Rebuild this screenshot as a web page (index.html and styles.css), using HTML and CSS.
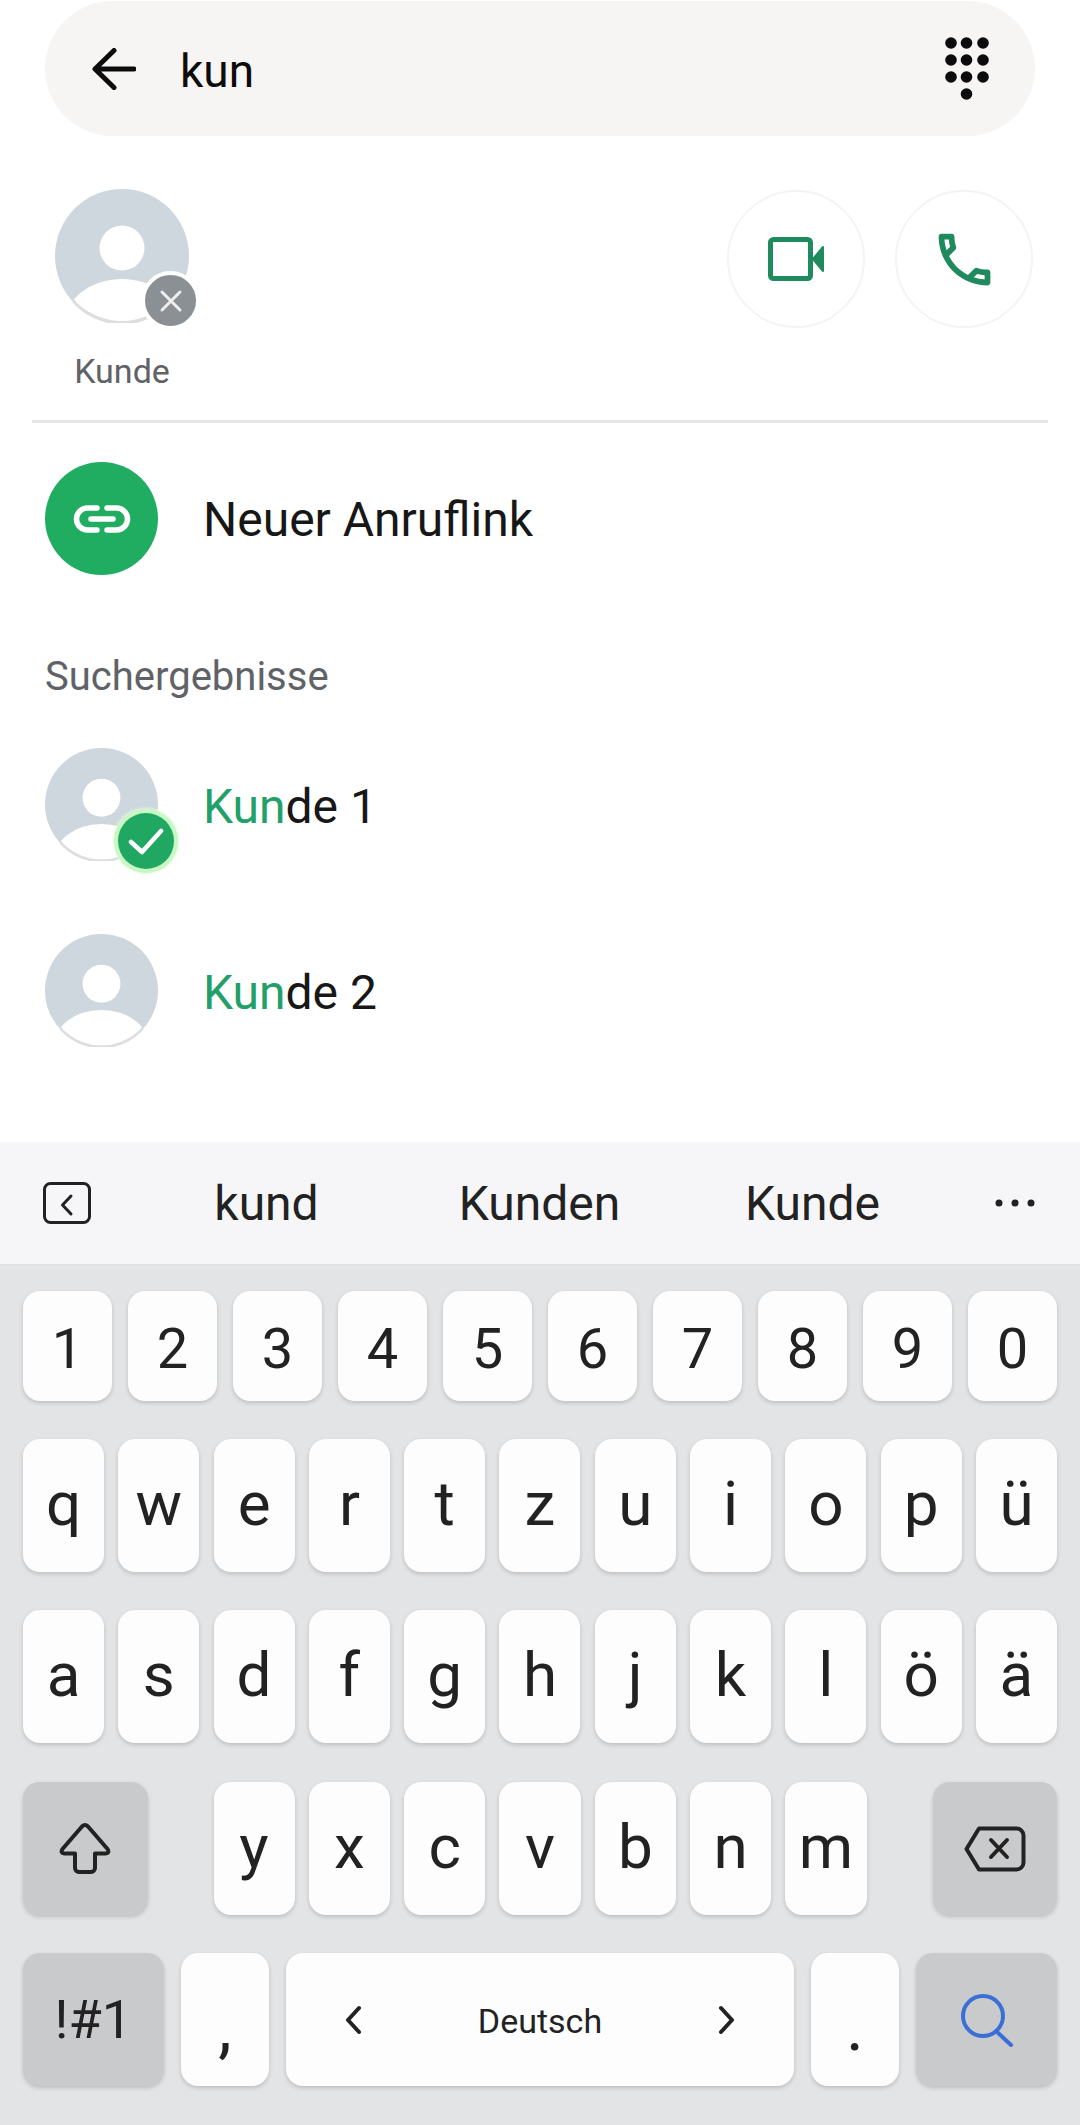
FILE: index.html
```html
<!DOCTYPE html>
<html lang="de">
<head>
<meta charset="utf-8">
<title>Suche</title>
<link rel="stylesheet" href="styles.css">
</head>
<body>
<svg class="defs" width="0" height="0" aria-hidden="true">
  <defs>
    <clipPath id="avatar-clip"><circle cx="67" cy="67" r="65"/></clipPath>
    <symbol id="avatar" viewBox="0 0 134 134">
      <circle cx="67" cy="67" r="67" fill="#cdd7dd"/>
      <path d="M17 113a67 67 0 0 0 100 0z" fill="#dcdedf"/>
      <circle cx="67" cy="59" r="22.500" fill="#fff"/>
      <ellipse cx="67" cy="136" rx="58" ry="46" fill="#fff" clip-path="url(#avatar-clip)"/>
    </symbol>
  </defs>
</svg>
<main class="screen">
  <header class="search">
    <svg class="back" width="44" height="42" viewBox="0 0 44 42"><path d="M42 21H4M22 2.500 3 21l19 18.500" fill="none" stroke="#0c0c0c" stroke-width="5" stroke-linecap="round" stroke-linejoin="round"/></svg>
    <span class="query">kun</span>
    <svg class="dial" width="44" height="64" viewBox="0 0 44 64" fill="#0c0c0c">
      <circle cx="6" cy="6" r="5.800"/><circle cx="21.500" cy="6" r="5.800"/><circle cx="38" cy="6" r="5.800"/>
      <circle cx="6" cy="23" r="5.800"/><circle cx="21.500" cy="23" r="5.800"/><circle cx="38" cy="23" r="5.800"/>
      <circle cx="6" cy="40" r="5.800"/><circle cx="21.500" cy="40" r="5.800"/><circle cx="38" cy="40" r="5.800"/>
      <circle cx="21.500" cy="57" r="5.800"/>
    </svg>
  </header>

  <section class="selected">
    <div class="picked">
      <div class="picked-photo">
        <svg class="avatar-lg"><use href="#avatar"/></svg>
        <span class="remove">
          <svg width="24" height="24" viewBox="0 0 24 24"><path d="M3 3l18 18M21 3 3 21" stroke="#eef0f0" stroke-width="3" stroke-linecap="round"/></svg>
        </span>
      </div>
      <span class="picked-name">Kunde</span>
    </div>
    <div class="actions">
      <button class="round">
        <svg width="56" height="44" viewBox="0 0 56 44"><rect x="2.500" y="2.500" width="40" height="39" rx="3" fill="none" stroke="#1f8a5e" stroke-width="5"/><path d="M45 22 55 10v24z" fill="#1f8a5e" stroke="#1f8a5e" stroke-width="2" stroke-linejoin="round"/></svg>
      </button>
      <button class="round">
        <svg width="69" height="69" viewBox="0 0 24 24"><path fill="#1f8a5e" d="M6.540 5c.06.89.21 1.760.45 2.590l-1.200 1.200c-.41-1.200-.67-2.470-.76-3.790h1.510m9.860 12.020c.85.24 1.720.39 2.600.45v1.490c-1.320-.09-2.590-.35-3.800-.75l1.200-1.190M7.500 3H4c-.55 0-1 .45-1 1 0 9.390 7.610 17 17 17 .55 0 1-.45 1-1v-3.490c0-.55-.45-1-1-1-1.240 0-2.450-.2-3.570-.57-.1-.04-.21-.05-.31-.05-.26 0-.51.1-.71.29l-2.200 2.200c-2.830-1.450-5.150-3.760-6.590-6.590l2.200-2.200c.28-.28.36-.67.25-1.020C8.700 6.450 8.500 5.250 8.500 4c0-.55-.45-1-1-1z"/></svg>
      </button>
    </div>
  </section>
  <hr class="divider">

  <section class="list">
    <div class="row row-link">
      <span class="link-icon">
        <svg width="58" height="28" viewBox="0 0 58 28" fill="none" stroke="#fff" stroke-width="5.500" stroke-linecap="round"><path d="M24 3H14.500a11 11 0 0 0 0 22H24M34 3h9.500a11 11 0 0 1 0 22H34M18 14h22"/></svg>
      </span>
      <span class="row-name">Neuer Anruflink</span>
    </div>
    <h2 class="list-title">Suchergebnisse</h2>
    <div class="row">
      <div class="photo">
        <svg class="avatar-md"><use href="#avatar"/></svg>
        <span class="check">
          <svg width="36" height="27" viewBox="0 0 36 27"><path d="M3 14l11 10L33 3" fill="none" stroke="#fff" stroke-width="4.500" stroke-linecap="round" stroke-linejoin="round"/></svg>
        </span>
      </div>
      <span class="row-name row-result"><span class="hit">Kun</span>de 1</span>
    </div>
    <div class="row row-next">
      <div class="photo"><svg class="avatar-md"><use href="#avatar"/></svg></div>
      <span class="row-name row-result"><span class="hit">Kun</span>de 2</span>
    </div>
  </section>

  <section class="keyboard">
    <div class="suggest">
      <span class="suggest-back">
        <svg width="48" height="42" viewBox="0 0 48 42" fill="none" stroke="#222" stroke-width="3"><rect x="1.500" y="1.500" width="45" height="39" rx="6"/><path d="M28 14 19.500 23l8.500 9" stroke-linecap="round" stroke-linejoin="round"/></svg>
      </span>
      <span class="word">kund</span>
      <span class="word">Kunden</span>
      <span class="word">Kunde</span>
      <span class="suggest-more">
        <svg width="40" height="8" viewBox="0 0 40 8" fill="#222"><circle cx="4" cy="4" r="3.500"/><circle cx="20" cy="4" r="3.500"/><circle cx="36" cy="4" r="3.500"/></svg>
      </span>
    </div>
    <div class="keys">
      <div class="krow krow-num">
        <span class="key digit">1</span><span class="key digit">2</span><span class="key digit">3</span><span class="key digit">4</span><span class="key digit">5</span><span class="key digit">6</span><span class="key digit">7</span><span class="key digit">8</span><span class="key digit">9</span><span class="key digit">0</span>
      </div>
      <div class="krow krow-letter">
        <span class="key">q</span><span class="key">w</span><span class="key">e</span><span class="key">r</span><span class="key">t</span><span class="key">z</span><span class="key">u</span><span class="key">i</span><span class="key">o</span><span class="key">p</span><span class="key">ü</span>
      </div>
      <div class="krow krow-letter">
        <span class="key">a</span><span class="key">s</span><span class="key">d</span><span class="key">f</span><span class="key">g</span><span class="key">h</span><span class="key">j</span><span class="key">k</span><span class="key">l</span><span class="key">ö</span><span class="key">ä</span>
      </div>
      <div class="krow krow-shift">
        <span class="key fn">
          <svg width="52" height="54" viewBox="0 0 52 54"><path d="M23 4.500q3-3 6 0L48.500 27q2.500 4-2 4.500H36V46a4 4 0 0 1-4 4H20a4 4 0 0 1-4-4V31.500H5.500q-4.500-.5-2-4.500z" fill="none" stroke="#222" stroke-width="4" stroke-linejoin="round"/></svg>
        </span>
        <div class="letters">
          <span class="key">y</span><span class="key">x</span><span class="key">c</span><span class="key">v</span><span class="key">b</span><span class="key">n</span><span class="key">m</span>
        </div>
        <span class="key fn">
          <svg width="62" height="46" viewBox="0 0 62 46" fill="none" stroke="#222" stroke-width="4" stroke-linejoin="round" stroke-linecap="round"><path d="M15 2.500h37a7 7 0 0 1 7.500 7v27a7 7 0 0 1-7.500 7H15L2.500 23z"/><path d="M27 14l16 17M43 14 27 31"/></svg>
        </span>
      </div>
      <div class="krow krow-bottom">
        <span class="key fn sym">!#1</span>
        <span class="key low">,</span>
        <span class="key space">
          <svg width="18" height="30" viewBox="0 0 18 30"><path d="M15 3 4 15l11 12" fill="none" stroke="#222" stroke-width="4" stroke-linecap="round" stroke-linejoin="round"/></svg>
          <span class="lang">Deutsch</span>
          <svg width="18" height="30" viewBox="0 0 18 30"><path d="M3 3l11 12L3 27" fill="none" stroke="#222" stroke-width="4" stroke-linecap="round" stroke-linejoin="round"/></svg>
        </span>
        <span class="key low">.</span>
        <span class="key fn">
          <svg width="54" height="54" viewBox="0 0 54 54" fill="none" stroke="#3b6fd6" stroke-width="4" stroke-linecap="round"><circle cx="23" cy="23" r="20"/><path d="M36 38l15 14"/></svg>
        </span>
      </div>
    </div>
  </section>
</main>
</body>
</html>
```

FILE: styles.css
```css
* { box-sizing: border-box; }
html, body { margin: 0; padding: 0; background: #fff; }
body { font-family: Roboto, "Liberation Sans", sans-serif; color: #171717; }
.defs { display: block; height: 0; }
.screen { width: 1080px; height: 2125px; display: flex; flex-direction: column; overflow: hidden; }

.search {
  margin: 1px 45px 0;
  height: 135px;
  flex: none;
  border-radius: 68px;
  background: #f6f5f3;
  display: flex;
  align-items: center;
  padding: 0 46px 0 47px;
}
.back { flex: none; }
.query { font-size: 46px; margin: 4px 0 0 44px; flex: 1; line-height: 1; color: #0c0c0c; }
.dial { flex: none; margin-top: 1px; }

.selected {
  flex: none;
  height: 284px;
  display: flex;
  justify-content: space-between;
  align-items: flex-start;
  padding: 53px 47px 0 55px;
}
.picked { width: 134px; display: flex; flex-direction: column; align-items: center; }
.picked-photo { position: relative; width: 134px; height: 134px; }
.avatar-lg { display: block; width: 134px; height: 134px; }
.remove {
  position: absolute;
  left: 86px;
  top: 82px;
  width: 59px;
  height: 59px;
  border-radius: 50%;
  border: 4px solid #fff;
  background: #8b9094;
  display: flex;
  align-items: center;
  justify-content: center;
}
.picked-name { margin-top: 28px; font-size: 34px; line-height: 40px; color: #5f6266; }
.actions { display: flex; gap: 30px; margin-top: 1px; }
.round {
  width: 138px;
  height: 138px;
  padding: 0;
  border-radius: 50%;
  border: 2px solid #f5f4f2;
  background: #fff;
  display: flex;
  align-items: center;
  justify-content: center;
}

.divider { flex: none; margin: 0 32px; height: 3px; border: 0; background: #e6e6e6; }

.list { flex: none; padding: 39px 0 0 45px; }
.row { display: flex; align-items: center; gap: 45px; height: 113px; }
.row-next { margin-top: 73px; }
.link-icon {
  width: 113px;
  height: 113px;
  border-radius: 50%;
  background: #20ad62;
  display: flex;
  align-items: center;
  justify-content: center;
  flex: none;
}
.row-name { font-size: 48px; line-height: 56px; margin-top: 2px; color: #171717; }
.row-result { margin-top: 4px; }
.hit { color: #23a06a; }
.list-title {
  margin: 79px 0 48px;
  font-size: 40px;
  line-height: 46px;
  font-weight: 400;
  color: #5f6266;
}
.photo { position: relative; width: 113px; height: 113px; flex: none; }
.avatar-md { display: block; width: 113px; height: 113px; }
.check {
  position: absolute;
  left: 73px;
  top: 65px;
  width: 56px;
  height: 56px;
  border-radius: 50%;
  background: #20a862;
  box-shadow: 0 0 0 4px #c9f7c4, 0 0 3px 5px #e3fbdf;
  display: flex;
  align-items: center;
  justify-content: center;
}

.keyboard { margin-top: auto; flex: none; height: 983px; background: #e3e4e5; display: flex; flex-direction: column; }
.suggest {
  flex: none;
  height: 123px;
  background: #f6f6f8;
  border-bottom: 1px solid #dfe0e2;
  display: grid;
  grid-template-columns: 130px 273px 273px 273px 131px;
  align-items: center;
}
.suggest-back { display: flex; padding-left: 43px; }
.word { text-align: center; font-size: 48px; line-height: 56px; margin-top: 2px; color: #222; }
.suggest-more { display: flex; justify-content: flex-end; padding-right: 45px; }

.keys { padding: 26px 23px 0; display: flex; flex-direction: column; gap: 38px; }
.krow { display: flex; justify-content: space-between; }
.krow-num { height: 110px; gap: 16px; }
.krow-letter, .krow-shift, .krow-bottom { height: 133px; }
.krow-letter { gap: 14.300px; }
.krow-shift { margin-top: 1px; }
.key {
  flex: 1 1 0;
  min-width: 0;
  border-radius: 17px;
  background: #fdfdfe;
  box-shadow: 0 2px 4px rgba(0, 0, 0, .17);
  display: flex;
  align-items: center;
  justify-content: center;
  font-size: 62px;
  line-height: 1;
  color: #222;
  padding-bottom: 3px;
}
.digit { font-size: 56px; padding: 5px 0 0; }
.fn { background: #c9cacc; padding: 0; }
.krow-shift .fn { flex: 0 0 124.500px; }
.letters { flex: 0 0 653px; display: flex; gap: 14.300px; }
.krow-bottom { gap: 17.500px; }
.krow-bottom .key { flex: 0 0 87.500px; }
.krow-bottom .fn { flex: 0 0 140.750px; }
.krow-bottom .space { flex: 0 0 507.500px; justify-content: space-between; padding: 0 58px; }
.sym { font-size: 54px; }
.low { font-size: 68px; font-weight: 400; padding: 14px 0 0; }
.lang { font-size: 34px; line-height: 40px; margin-top: 2px; font-weight: 400; }
```
